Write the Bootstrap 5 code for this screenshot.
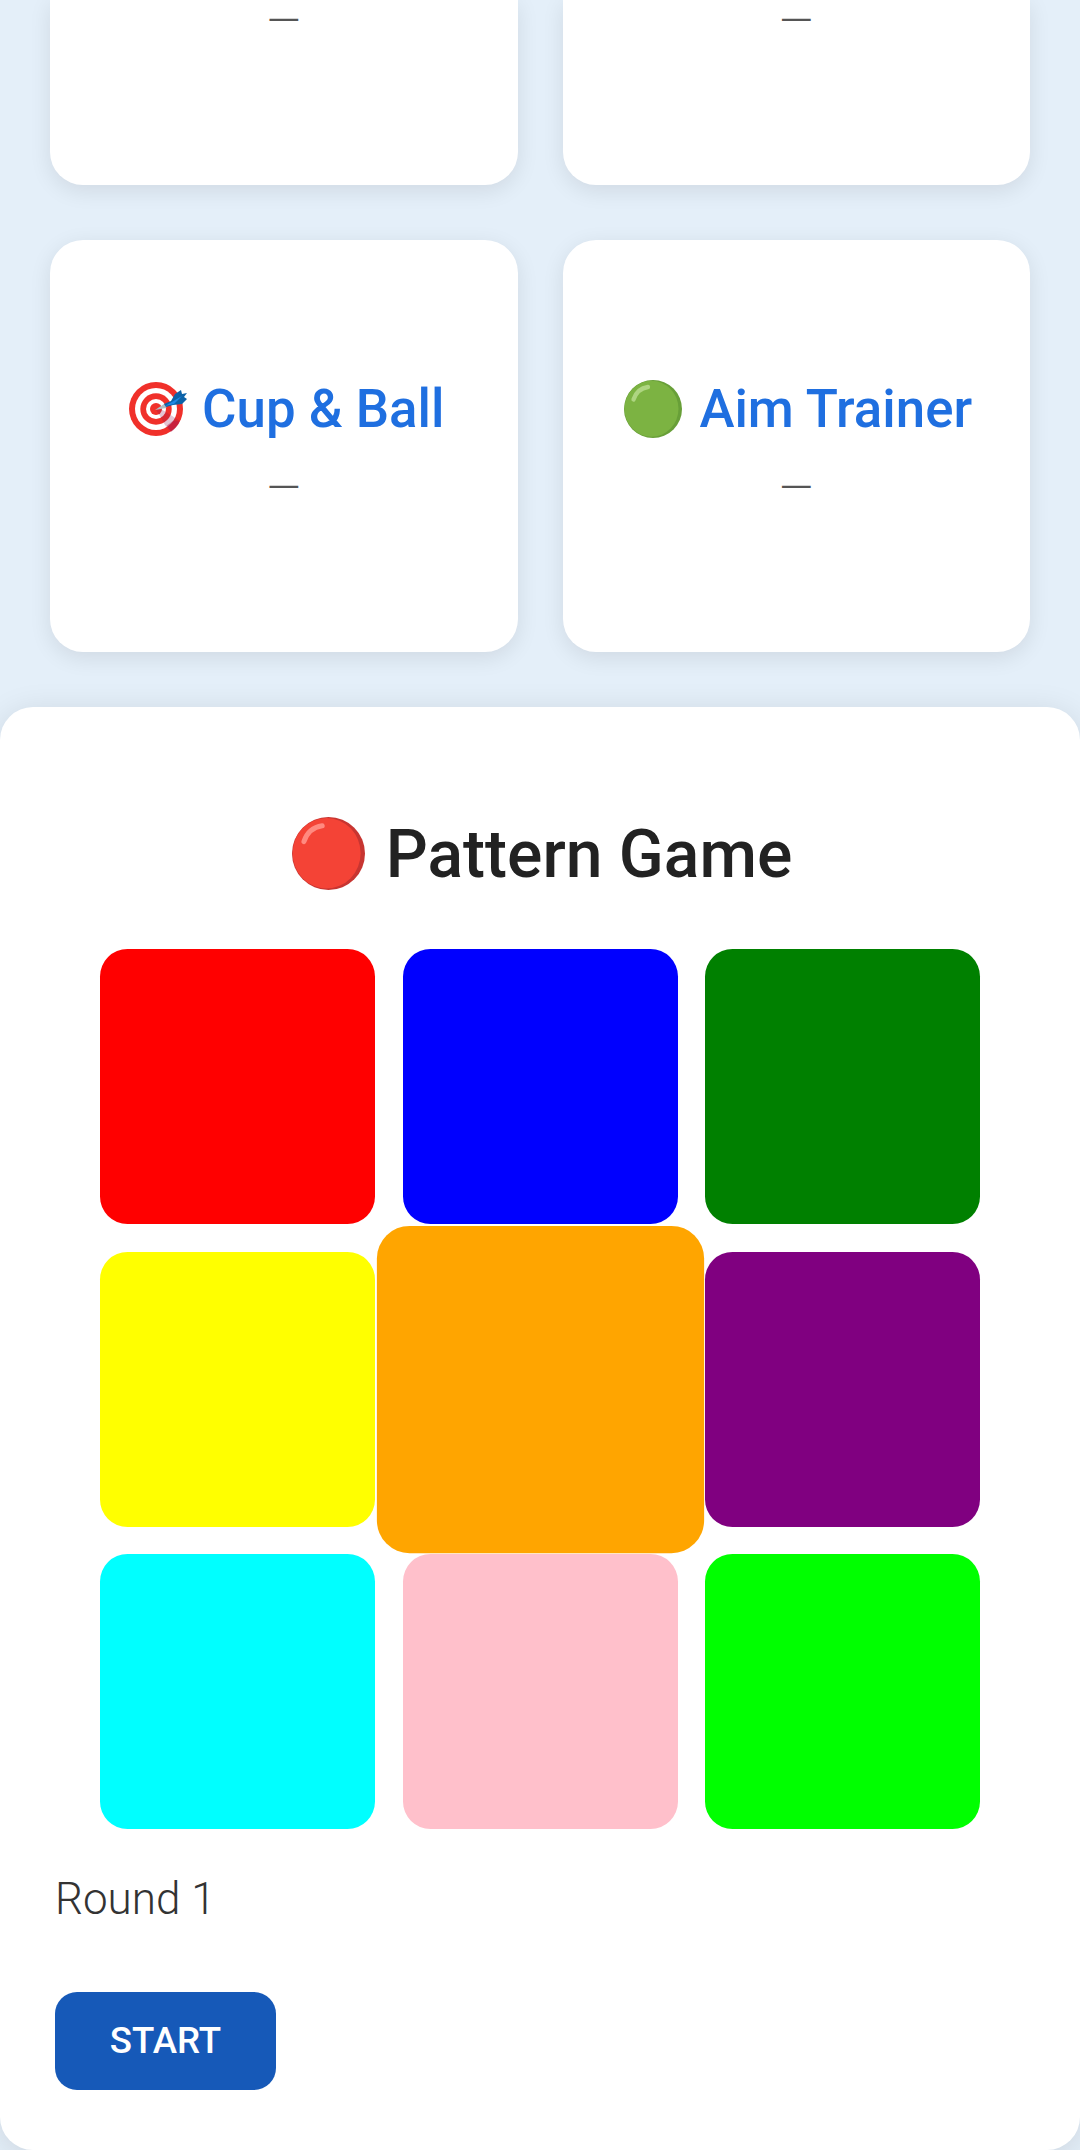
<!DOCTYPE html>
<html lang="en">
<head>
<meta charset="utf-8">
<meta name="viewport" content="width=device-width, initial-scale=1">
<title>Mini Games</title>
<link rel="stylesheet" href="https://cdn.jsdelivr.net/npm/bootstrap@5.3.0/dist/css/bootstrap.min.css">
<style>
html, body { height: 2150px; overflow: hidden; }
body { background: #e4eff9; font-family: Roboto, sans-serif; font-weight: 300; color: #333; }
.games { padding: 0 50px; column-gap: 45px; row-gap: 55px; display: grid; grid-template-columns: 1fr 1fr; }
.tile-card { height: 412px; border-radius: 33px; box-shadow: 0 5.5px 22px rgba(0,0,0,.09); padding-top: 137px; }
.tile-card.partial { height: 185px; padding-top: 0; border-radius: 0 0 33px 33px; }
.tile-title { font-size: 52.8px; line-height: 64px; font-weight: 500; color: #1f6fe0; margin: 0; padding-left: 4px; }
.tile-title svg { width: 58px; height: 58px; margin-right: 17px; }
.tile-title svg.target-icon { margin-left: 2px; margin-right: 15px; }
.score { font-size: 44px; line-height: 58px; color: #555; margin: 18px 0 0; }
.partial .score { margin-top: -8px; }
.game-panel { margin-top: 55px; height: 1443px; padding: 108px 55px 60px; border-radius: 33px; box-shadow: 0 5.5px 33px rgba(0,0,0,.11); }
.game-title { font-size: 66px; line-height: 80px; font-weight: 500; color: #222; margin: 0 0 54px; padding-left: 4px; }
.game-title svg { width: 73px; height: 73px; margin-right: 21px; margin-bottom: 3px; }
.pads { display: grid; grid-template-columns: repeat(3, 275px); grid-auto-rows: 275px; gap: 27.5px; }
.pad { border-radius: 27.5px; border: 0; padding: 0; }
.pad.lit { transform: scale(1.19); }
.round-label { font-size: 44px; line-height: 66px; margin: 37px 0 59.5px; }
.start-btn { width: 221px; height: 98px; padding: 0; border: 0; border-radius: 22px; background: #1659b8; font-size: 36.67px; font-weight: 500; line-height: 98px; }
</style>
</head>
<body>
<main class="d-flex flex-column">
  <section class="games text-center">
    <div class="tile-card partial bg-white"><p class="score">—</p></div>
    <div class="tile-card partial bg-white"><p class="score">—</p></div>
    <div class="tile-card bg-white">
      <h2 class="tile-title d-flex justify-content-center align-items-center">
        <svg class="target-icon" viewBox="0 0 58 58" aria-hidden="true">
          <circle cx="27" cy="29" r="27" fill="#f0302a"/>
          <circle cx="27" cy="29" r="21" fill="#fff"/>
          <circle cx="27" cy="29" r="15.7" fill="#f0302a"/>
          <circle cx="27" cy="29" r="10" fill="#fff"/>
          <circle cx="27" cy="29" r="6" fill="#f0302a"/>
          <path d="M27 30l5-1 8 5 11 7q-3 7-9 11l-6-7-5-9z" fill="#8e1550" opacity=".25"/>
          <path d="M44.500 40.500l6 1q-3 6.500-8.500 10l-4-6z" fill="#b3174a" opacity=".45"/>
          <path d="M26 30l9-6 4 0-2 4z" fill="#b0bec5"/>
          <path d="M35 24l7-3 4-7 6-4 1 4 5-1-3 4 3 2-5 5-9 1-7 2z" fill="#0b62a8"/>
          <path d="M36 26l17-10-8 8z" fill="#1e88e5"/>
        </svg>
        <span>Cup &amp; Ball</span>
      </h2>
      <p class="score">—</p>
    </div>
    <div class="tile-card bg-white">
      <h2 class="tile-title d-flex justify-content-center align-items-center">
        <svg viewBox="0 0 58 58" aria-hidden="true">
          <circle cx="29" cy="29" r="29" fill="#689f38"/>
          <ellipse cx="27.5" cy="28.8" rx="27" ry="28" fill="#7cb342"/>
          <path d="M9.5 19.5C12 12 17 8 24 7" fill="none" stroke="#aed581" stroke-width="4.3" stroke-linecap="round"/>
        </svg>
        <span>Aim Trainer</span>
      </h2>
      <p class="score">—</p>
    </div>
  </section>
  <section class="game-panel bg-white">
    <h1 class="game-title d-flex justify-content-center align-items-center">
      <svg viewBox="0 0 58 58" aria-hidden="true">
        <circle cx="29" cy="29" r="29" fill="#c73531"/>
        <ellipse cx="27.5" cy="28.8" rx="27" ry="28" fill="#f44336"/>
        <path d="M9.5 19.5C12 12 17 8 24 7" fill="none" stroke="#ff8a80" stroke-width="4" stroke-linecap="round"/>
      </svg>
      <span>Pattern Game</span>
    </h1>
    <div class="pads justify-content-center">
      <button class="pad" style="background:red" aria-label="Red"></button>
      <button class="pad" style="background:blue" aria-label="Blue"></button>
      <button class="pad" style="background:green" aria-label="Green"></button>
      <button class="pad" style="background:yellow" aria-label="Yellow"></button>
      <button class="pad lit" style="background:orange" aria-label="Orange"></button>
      <button class="pad" style="background:purple" aria-label="Purple"></button>
      <button class="pad" style="background:cyan" aria-label="Cyan"></button>
      <button class="pad" style="background:pink" aria-label="Pink"></button>
      <button class="pad" style="background:lime" aria-label="Lime"></button>
    </div>
    <p class="round-label">Round 1</p>
    <button class="btn btn-primary start-btn">START</button>
  </section>
</main>
<script src="https://cdn.jsdelivr.net/npm/bootstrap@5.3.0/dist/js/bootstrap.bundle.min.js"></script>
</body>
</html>
